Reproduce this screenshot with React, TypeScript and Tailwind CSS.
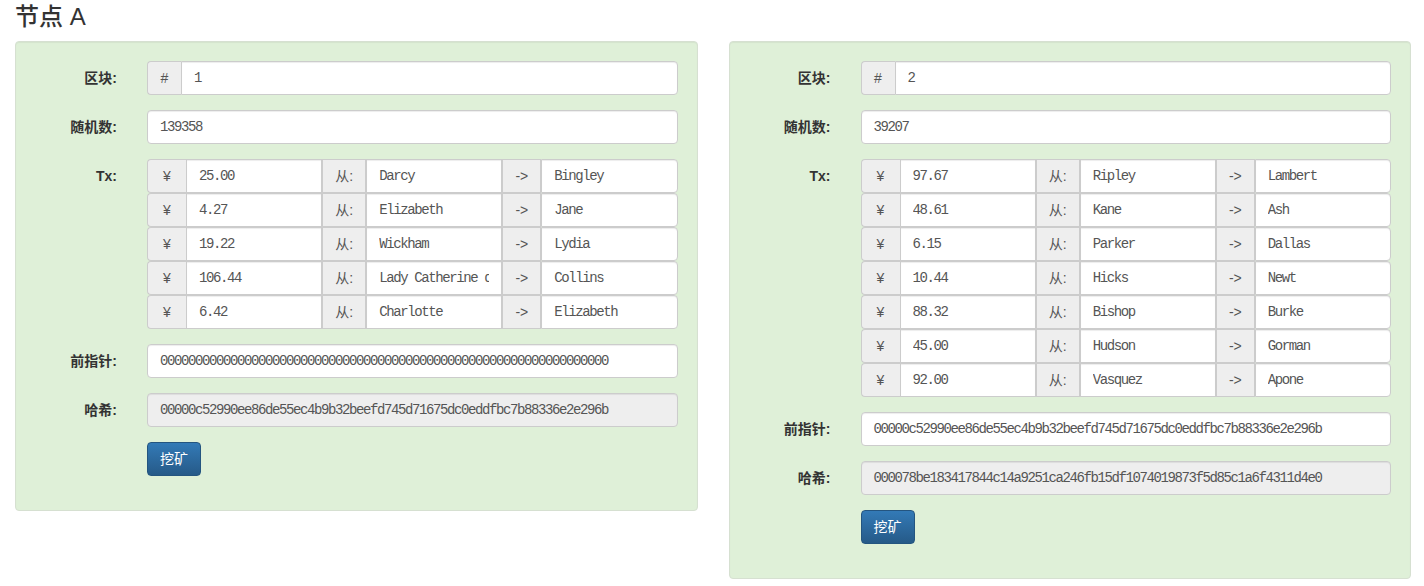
import React from 'react';

type Tx = { amount: string; from: string; to: string };
type Block = { num: string; nonce: string; txs: Tx[]; prev: string; hash: string };

const HASH_A = '00000c52990ee86de55ec4b9b32beefd745d71675dc0eddfbc7b88336e2e296b';

const BLOCKS: Block[] = [
  {
    num: '1',
    nonce: '139358',
    txs: [
      { amount: '25.00', from: 'Darcy', to: 'Bingley' },
      { amount: '4.27', from: 'Elizabeth', to: 'Jane' },
      { amount: '19.22', from: 'Wickham', to: 'Lydia' },
      { amount: '106.44', from: 'Lady Catherine de Bourgh', to: 'Collins' },
      { amount: '6.42', from: 'Charlotte', to: 'Elizabeth' },
    ],
    prev: '0000000000000000000000000000000000000000000000000000000000000000',
    hash: HASH_A,
  },
  {
    num: '2',
    nonce: '39207',
    txs: [
      { amount: '97.67', from: 'Ripley', to: 'Lambert' },
      { amount: '48.61', from: 'Kane', to: 'Ash' },
      { amount: '6.15', from: 'Parker', to: 'Dallas' },
      { amount: '10.44', from: 'Hicks', to: 'Newt' },
      { amount: '88.32', from: 'Bishop', to: 'Burke' },
      { amount: '45.00', from: 'Hudson', to: 'Gorman' },
      { amount: '92.00', from: 'Vasquez', to: 'Apone' },
    ],
    prev: HASH_A,
    hash: '000078be183417844c14a9251ca246fb15df1074019873f5d85c1a6f4311d4e0',
  },
];

const mono = "font-['Liberation_Mono',monospace] text-[14px] tracking-[-1.4px] text-[#555]";
const addon =
  "flex h-[34px] shrink-0 items-center justify-center border border-[#ccc] bg-[#eee] text-[14px] text-[#555]";

function Label({ children }: { children: React.ReactNode }) {
  return <div className="pt-[7px] text-right text-[14px] font-bold leading-5 text-[#333]">{children}</div>;
}

function Field({ value, disabled }: { value: string; disabled?: boolean }) {
  return (
    <div
      className={`flex h-[34px] items-center overflow-hidden whitespace-nowrap rounded border border-[#ccc] px-3 pt-px shadow-[inset_0_1px_1px_rgba(0,0,0,0.075)] ${mono} ${disabled ? 'bg-[#eee]' : 'bg-white'}`}
    >
      {value}
    </div>
  );
}

function Cell({ value, last }: { value: string; last?: boolean }) {
  return (
    <div
      className={`flex h-[34px] min-w-0 flex-1 items-center border border-[#ccc] bg-white px-3 pt-px shadow-[inset_0_1px_1px_rgba(0,0,0,0.075)] ${mono} ${last ? 'rounded-r' : ''}`}
    >
      <span className="block min-w-0 flex-1 overflow-hidden whitespace-nowrap">{value}</span>
    </div>
  );
}

function BlockPanel({ block }: { block: Block }) {
  return (
    <div className="rounded border border-[#d6e0d1] bg-[#dff0d8] px-[19px] pb-[34px] pt-[19px] shadow-[inset_0_1px_1px_rgba(0,0,0,0.05)]">
      <div className="grid grid-cols-[82px_1fr] gap-x-[30px] gap-y-[15px]">
        <Label>区块:</Label>
        <div className="flex">
          <div className={`${addon} w-[34px] rounded-l border-r-0`}>#</div>
          <div
            className={`flex h-[34px] flex-1 items-center rounded-r border border-[#ccc] bg-white px-3 pt-px shadow-[inset_0_1px_1px_rgba(0,0,0,0.075)] ${mono}`}
          >
            {block.num}
          </div>
        </div>

        <Label>随机数:</Label>
        <Field value={block.nonce} />

        <Label>Tx:</Label>
        <div className="flex flex-col">
          {block.txs.map((tx, i) => (
            <div key={i} className="flex">
              <div className={`${addon} w-[39px] rounded-l border-r-0`}>¥</div>
              <Cell value={tx.amount} />
              <div className={`${addon} w-[44px]`}>从:</div>
              <Cell value={tx.from} />
              <div className={`${addon} w-[39px]`}>-&gt;</div>
              <Cell value={tx.to} last />
            </div>
          ))}
        </div>

        <Label>前指针:</Label>
        <Field value={block.prev} />

        <Label>哈希:</Label>
        <Field value={block.hash} disabled />

        <div />
        <div>
          <button className="h-[34px] rounded border border-[#245580] bg-gradient-to-b from-[#337ab7] to-[#265a88] px-3 text-[14px] text-white">
            挖矿
          </button>
        </div>
      </div>
    </div>
  );
}

export default function App() {
  return (
    <div className="min-h-[586px] bg-white pl-[15px] pr-[13px] font-['Liberation_Sans','Noto_Sans_CJK_SC',sans-serif]">
      <h3 className="mb-[11px] pt-[4px] text-[24px] font-medium leading-[26px] text-[#333]">节点 A</h3>
      <div className="grid grid-cols-2 items-start gap-x-[31px]">
        {BLOCKS.map((b) => (
          <BlockPanel key={b.num} block={b} />
        ))}
      </div>
    </div>
  );
}
